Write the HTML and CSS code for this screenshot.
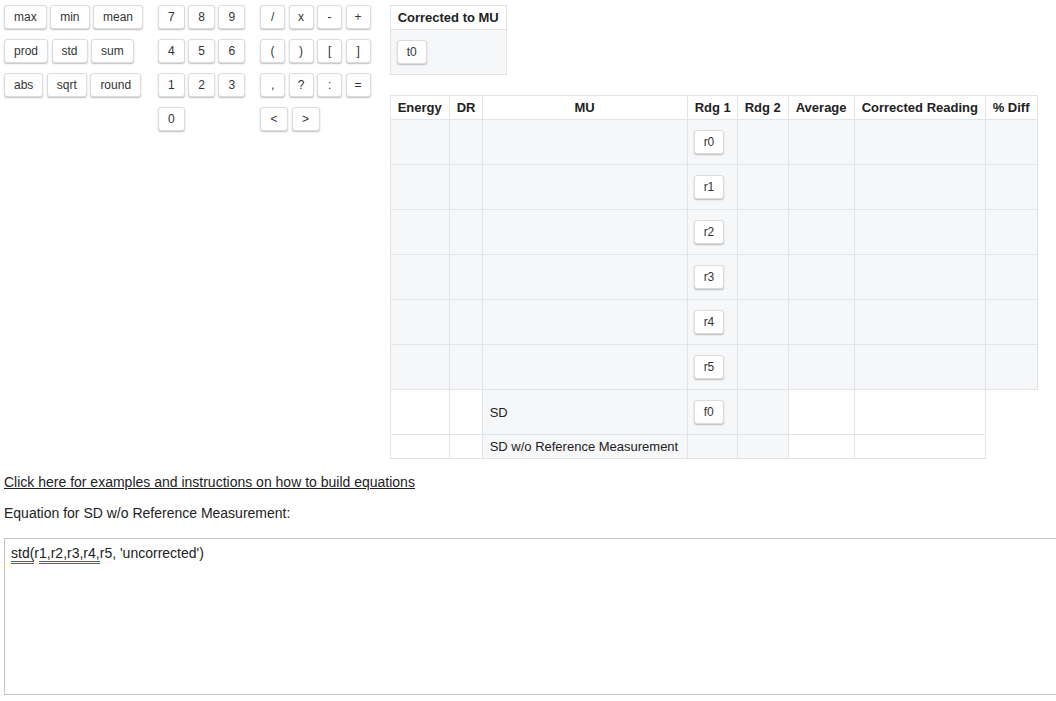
FILE: index.html
```html
<!DOCTYPE html>
<html>
<head>
<meta charset="utf-8">
<link rel="stylesheet" href="styles.css">
</head>
<body>
<div class="top">
  <div class="keypad">
    <div class="group">
      <div class="krow"><button class="btn">max</button><button class="btn">min</button><button class="btn">mean</button></div>
      <div class="krow"><button class="btn">prod</button><button class="btn">std</button><button class="btn">sum</button></div>
      <div class="krow"><button class="btn">abs</button><button class="btn">sqrt</button><button class="btn">round</button></div>
    </div>
    <div class="group">
      <div class="krow"><button class="btn">7</button><button class="btn">8</button><button class="btn">9</button></div>
      <div class="krow"><button class="btn">4</button><button class="btn">5</button><button class="btn">6</button></div>
      <div class="krow"><button class="btn">1</button><button class="btn">2</button><button class="btn">3</button></div>
      <div class="krow"><button class="btn">0</button></div>
    </div>
    <div class="group ops">
      <div class="krow"><button class="btn">/</button><button class="btn">x</button><button class="btn">-</button><button class="btn">+</button></div>
      <div class="krow"><button class="btn">(</button><button class="btn">)</button><button class="btn">[</button><button class="btn">]</button></div>
      <div class="krow"><button class="btn">,</button><button class="btn">?</button><button class="btn">:</button><button class="btn">=</button></div>
      <div class="krow"><button class="btn wide">&lt;</button><button class="btn wide">&gt;</button></div>
    </div>
  </div>
  <div class="tables">
    <table class="grid corr">
      <thead><tr><th>Corrected to MU</th></tr></thead>
      <tbody><tr><td class="g btncell"><button class="btn">t0</button></td></tr></tbody>
    </table>
    <table class="grid main">
      <colgroup>
        <col class="c-energy"><col class="c-dr"><col class="c-mu"><col class="c-r1"><col class="c-r2"><col class="c-avg"><col class="c-corr"><col class="c-diff">
      </colgroup>
      <thead>
        <tr><th>Energy</th><th>DR</th><th>MU</th><th>Rdg 1</th><th>Rdg 2</th><th>Average</th><th>Corrected Reading</th><th>% Diff</th></tr>
      </thead>
      <tbody>
        <tr class="data"><td></td><td></td><td></td><td class="btncell"><button class="btn">r0</button></td><td></td><td></td><td></td><td></td></tr>
        <tr class="data"><td></td><td></td><td></td><td class="btncell"><button class="btn">r1</button></td><td></td><td></td><td></td><td></td></tr>
        <tr class="data"><td></td><td></td><td></td><td class="btncell"><button class="btn">r2</button></td><td></td><td></td><td></td><td></td></tr>
        <tr class="data"><td></td><td></td><td></td><td class="btncell"><button class="btn">r3</button></td><td></td><td></td><td></td><td></td></tr>
        <tr class="data"><td></td><td></td><td></td><td class="btncell"><button class="btn">r4</button></td><td></td><td></td><td></td><td></td></tr>
        <tr class="data"><td></td><td></td><td></td><td class="btncell"><button class="btn">r5</button></td><td></td><td></td><td></td><td></td></tr>
        <tr class="sd"><td></td><td></td><td class="g label">SD</td><td class="g btncell"><button class="btn">f0</button></td><td class="g"></td><td></td><td></td></tr>
        <tr class="sdwo"><td></td><td></td><td class="g label">SD w/o Reference Measurement</td><td class="g"></td><td class="g"></td><td></td><td></td></tr>
      </tbody>
    </table>
  </div>
</div>
<p class="link-line"><a class="help" href="#">Click here for examples and instructions on how to build equations</a></p>
<p class="eq-label">Equation for SD w/o Reference Measurement:</p>
<div class="editor" role="textbox"><span class="sp">std(</span>r<span class="sp">1,r2,r3,r4,</span>r5, 'uncorrected')</div>
</body>
</html>
```
FILE: styles.css
```css
html, body {
  margin: 0;
  padding: 0;
  background: #ffffff;
  overflow: hidden;
}
body {
  font-family: "Liberation Sans", Arial, sans-serif;
  color: #222;
  padding: 5px 0 0 4px;
}
.top {
  display: flex;
  align-items: flex-start;
  gap: 19px;
}
.keypad {
  display: flex;
  align-items: flex-start;
  gap: 15px;
}
.group {
  display: flex;
  flex-direction: column;
  gap: 10px;
}
.krow {
  display: flex;
  gap: 3.5px;
}
.btn {
  font-family: "Liberation Sans", Arial, sans-serif;
  font-size: 12px;
  color: #333;
  height: 24px;
  line-height: 22px;
  padding: 0 9px;
  margin: 0;
  background: #fff;
  border: 1px solid #dcdcdc;
  border-radius: 3px;
  box-shadow: 0 1px 1.5px rgba(0, 0, 0, 0.25);
  cursor: pointer;
}
.ops .btn {
  min-width: 25px;
  padding: 0 8px;
}
.ops .btn.wide {
  min-width: 28px;
}
.tables {
  display: flex;
  flex-direction: column;
  align-items: flex-start;
  gap: 20px;
}
.grid {
  border-collapse: collapse;
  font-size: 13px;
}
.grid th {
  font-size: 13px;
  font-weight: bold;
  color: #222;
  background: #fff;
  border: 1px solid #e2e3e6;
  padding: 4px 7px;
  line-height: 15px;
  height: 15px;
  text-align: center;
  white-space: nowrap;
}
.grid td {
  border: 1px solid #e2e3e6;
  padding: 0 6px;
  background: #fff;
}
.grid td.g,
.grid tr.data td {
  background: #f6f7f9;
}
.corr {
  width: 117px;
}
.corr th {
  text-align: left;
}
.btncell {
  height: 44px;
  padding: 0 6px;
  vertical-align: middle;
}
.main {
  table-layout: fixed;
  width: 648px;
}
.c-energy { width: 59px; }
.c-dr { width: 33px; }
.c-mu { width: 205px; }
.c-r1 { width: 50px; }
.c-r2 { width: 51px; }
.c-avg { width: 66px; }
.c-corr { width: 131px; }
.c-diff { width: 52px; }
.main tr.data td,
.main tr.sd td {
  height: 44px;
}
.main td.label {
  padding: 0 7px;
  white-space: nowrap;
  color: #222;
  font-size: 13px;
}
.main tr.sdwo td {
  height: 23px;
  line-height: 15px;
}
.link-line {
  margin: 15px 0 0 0;
  font-size: 14px;
  line-height: 17px;
}
.help {
  color: #222;
  text-decoration: underline;
}
.eq-label {
  margin: 14px 0 0 0;
  font-size: 14px;
  line-height: 17px;
  color: #222;
}
.editor {
  margin-top: 16px;
  width: 1070px;
  height: 143px;
  border: 1px solid #c3c3c3;
  padding: 6px 6px;
  font-size: 14px;
  line-height: 17px;
  color: #222;
}
.sp {
  border-bottom: 3px double #3a5cd6;
}
```
